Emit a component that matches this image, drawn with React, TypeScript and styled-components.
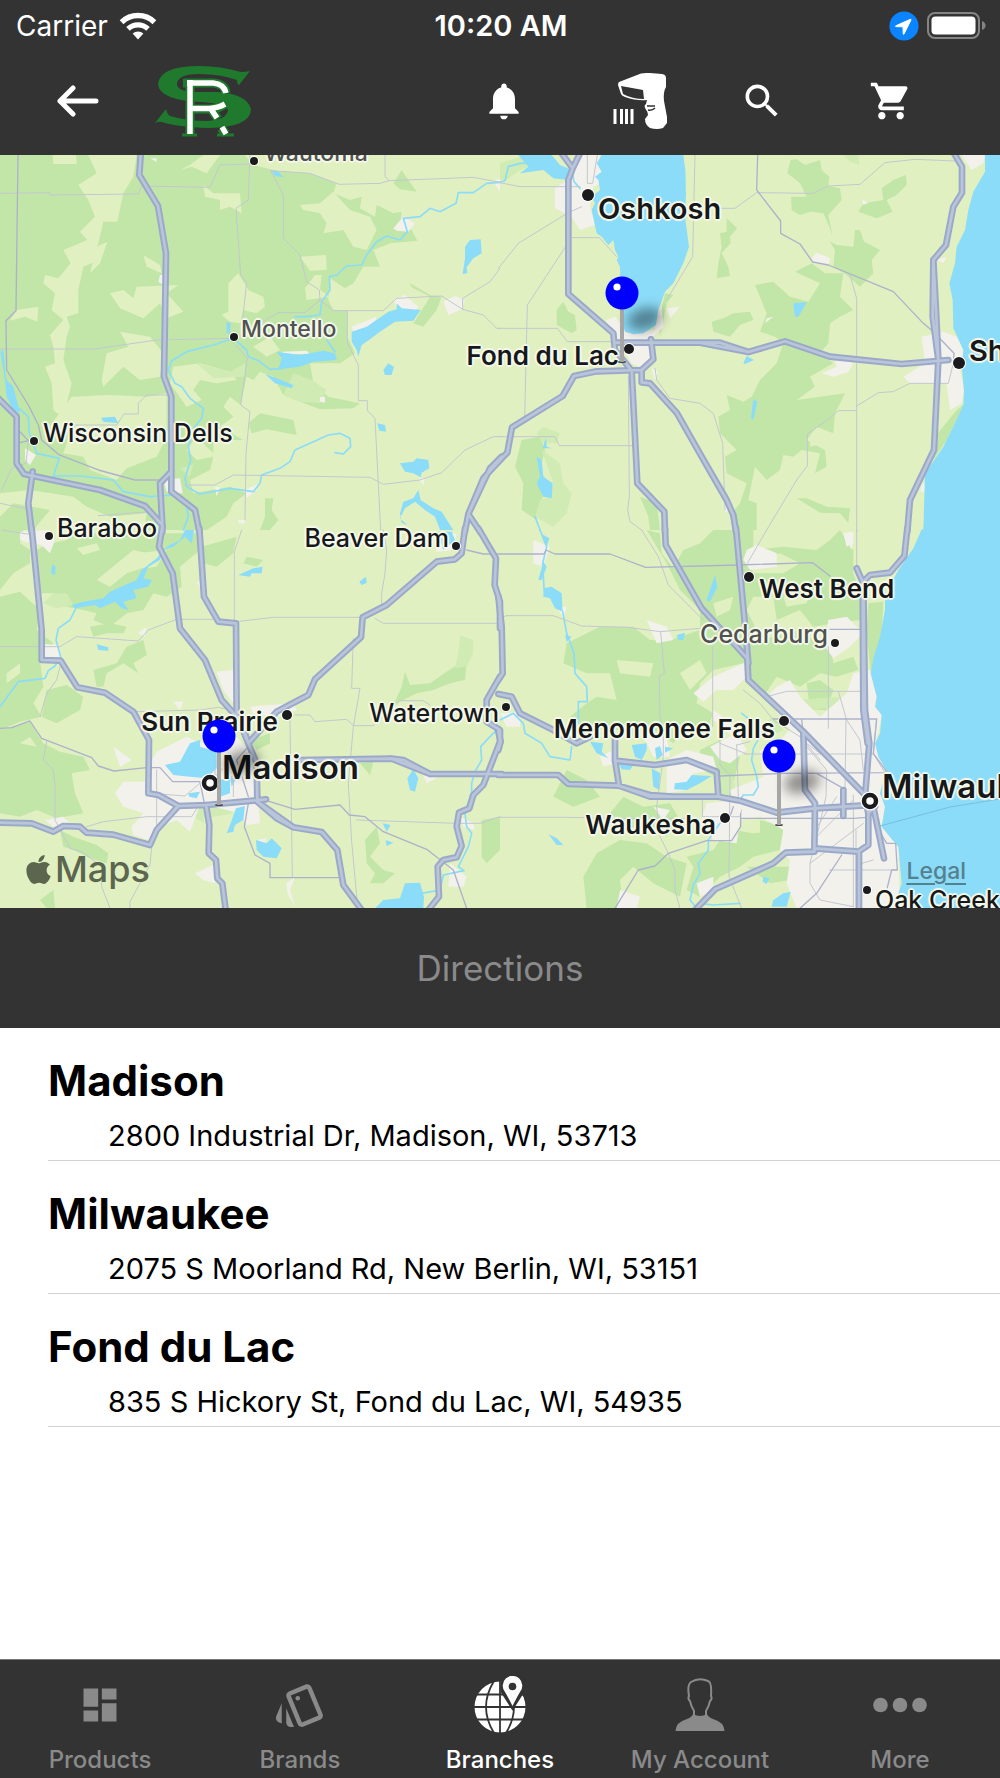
import React from 'react';
import styled, { createGlobalStyle } from 'styled-components';
import { MdDashboard, MdNotifications, MdOutlineStyle, MdSearch, MdShoppingCart } from 'react-icons/md';
import { FaApple } from 'react-icons/fa';

const color = {
  bar: '#333333',
  muted: '#8a8a8a',
  line: '#d2d2d2',
  land: '#e1f0c1',
  wood: '#c1e6a8',
  park: '#d0ebb3',
  town: '#f2f1ec',
  water: '#8bdcf8',
  minor: '#c3c8cf',
  major: '#adb2cb',
  casing: '#9ba9c9',
  highway: '#bbc5da',
};

const GlobalStyle = createGlobalStyle`
  *, *::before, *::after { box-sizing: border-box; }
  body {
    margin: 0;
    background: #fff;
    color: #000;
    font-family: Inter, "Liberation Sans", sans-serif;
  }
  button { font: inherit; color: inherit; background: none; border: 0; padding: 0; cursor: pointer; }
  h2, p, ul { margin: 0; padding: 0; }
  ul { list-style: none; }
  svg { display: block; }
`;

const Page = styled.div`
  display: flex;
  flex-direction: column;
  min-height: 100vh;
`;

/* ---------- top bars ---------- */

const Header = styled.header`
  background: ${color.bar};
  color: #fff;
`;

const StatusBar = styled.div`
  display: grid;
  grid-template-columns: 1fr auto 1fr;
  align-items: center;
  height: 50px;
  padding: 1px 14px 0 16px;
  font-size: 28px;
  line-height: 34px;
`;

const StatusGroup = styled.div<{ $end?: boolean }>`
  display: flex;
  align-items: center;
  justify-content: ${(p) => (p.$end ? 'flex-end' : 'flex-start')};
  gap: ${(p) => (p.$end ? '8px' : '11px')};
`;

const Clock = styled.time`
  font-size: 29px;
  font-weight: 600;
`;

const NavBar = styled.nav`
  display: flex;
  align-items: center;
  height: 105px;
  padding: 0 45px 4px 0;
`;

const NavButton = styled.button<{ $wide?: boolean }>`
  display: flex;
  align-items: center;
  justify-content: center;
  width: ${(p) => (p.$wide ? '155px' : '129px')};
  height: 100px;
`;

const NavActions = styled.div`
  display: flex;
  margin-left: auto;
`;

/* ---------- map ---------- */

const MapArea = styled.section`
  position: relative;
  overflow: hidden;
  aspect-ratio: 1000 / 753;
  background: ${color.land};
`;

const MapCanvas = styled.svg`
  width: 100%;
  height: 100%;
`;

type LabelSize = 'small' | 'town' | 'city' | 'large' | 'metro';

const labelFont: Record<LabelSize, string> = {
  small: '500 23px',
  town: '500 25px',
  city: '600 26px',
  large: '600 29px',
  metro: '600 33px',
};

const MapLabel = styled.span<{ $x: number; $y: number; $size: LabelSize; $end?: boolean; $faint?: boolean }>`
  position: absolute;
  top: ${(p) => ((p.$y - 155) / 753) * 100}%;
  ${(p) => (p.$end ? `right: ${(1000 - p.$x) / 10}%;` : `left: ${p.$x / 10}%;`)}
  transform: translateY(-50%);
  font: ${(p) => labelFont[p.$size]}/32px Inter, "Liberation Sans", sans-serif;
  color: ${(p) => (p.$faint ? '#505250' : '#17181a')};
  white-space: nowrap;
  text-shadow: 2px 0 1px #f5f8ec, -2px 0 1px #f5f8ec, 0 2px 1px #f5f8ec, 0 -2px 1px #f5f8ec,
    1px 1px 1px #f5f8ec, -1px -1px 1px #f5f8ec, 1px -1px 1px #f5f8ec, -1px 1px 1px #f5f8ec;
`;

const PinButton = styled.button<{ $x: number; $y: number }>`
  position: absolute;
  left: ${(p) => p.$x / 10}%;
  top: ${(p) => ((p.$y - 155) / 753) * 100}%;
  width: 80px;
  height: 90px;
  transform: translate(-20px, -20px);
`;

const MapBrand = styled.div`
  position: absolute;
  left: 22px;
  bottom: 19px;
  display: flex;
  align-items: center;
  color: #5c654e;
  font-size: 36px;
  font-weight: 500;
  line-height: 40px;
`;

const LegalLink = styled.a`
  position: absolute;
  right: 34px;
  bottom: 23px;
  color: #55808f;
  font-size: 23px;
  font-weight: 500;
  line-height: 28px;
  text-underline-offset: 4px;
  text-decoration-thickness: 2px;
`;

/* Geography, one sheet per quadrant. Sheet units are a third of a map unit. */
interface Sheet {
  x: number;
  y: number;
  wood: string;
  clearing: string;
  park: string;
  town: string;
  water: string;
  river: string;
  minor: string;
  major: string;
  highway: string;
}

const sheets: Sheet[] = [
  {
    x: 0,
    y: 150,
    wood: `M0 15H735L760 45 830 62 930 70 1010 100 1000 130 1050 150 1085 140 1080 175 1125 200 1130 165 1180 190 1205 185 1200 230
      1235 240 1252 272 1170 280 1120 300 1140 350 1090 350 1060 400 1035 415 990 385 985 450 1000 480 1042 482 1042 560 1065 610
      1020 640 930 640 940 700 985 740 1080 760 1060 775 960 778 900 755 850 735 820 680 780 665 760 690 740 680 722 765 690 740
      670 770 700 800 660 830 730 870 640 870 640 910 590 860 560 900 590 930 640 920 630 960 570 990 580 1030 690 1010 740 1030
      700 1060 680 1100 620 1140H0Z
      M1180 100L1205 60 1225 90 1250 125 1200 118Z M1230 400L1290 435 1325 440 1310 480 1270 530 1240 520 1275 465 1290 440 1235 412Z
      M780 790L880 810 890 855 800 838 755 850 745 820Z M795 1045H820L815 1080 835 1110 810 1140H780L795 1100Z`,
    clearing: `M265 15H410L400 80 370 130 352 215 310 215 290 300 295 330 250 350 235 420 235 490 200 500 210 530 200 560 190 630 215 700
      190 805 160 780 155 700 135 650 165 640 160 590 150 555 190 510 155 480 165 430 130 400 135 375 175 385 212 340 190 300 262 270
      240 245 285 200 265 150 235 105 290 70Z
      M158 15H228L230 42H160Z M48 480L115 470 112 515 75 500 30 512Z M270 370L290 290 322 275 300 340Z M430 315L480 345 485 370 440 350Z
      M330 430L370 420 400 445 410 410 535 405 500 430 550 485 500 505 480 460 430 505 360 475Z M360 545L450 560 490 610 480 680 420 690
      370 650 310 710 305 690 320 610 385 590Z M170 800L215 740 330 735 440 740 500 730 500 860 470 920 380 955 350 990 270 960 250 920
      190 910 210 850 150 830Z M520 650L600 640 690 665 710 690 650 700 600 690 580 720 605 750 560 770 510 700Z
      M540 60L570 45 610 15H660L620 70 575 50Z M610 105L640 130 720 130 725 190 690 170 660 180 660 150 615 140Z
      M900 165L960 160 1000 125 1050 180 1110 200 1130 240 1100 300 1060 290 1030 240 970 250 980 220 960 190 910 180Z
      M900 320L978 315 980 360 930 362Z M945 375H965L960 420 990 440 920 450 915 415Z M715 370L745 420 790 440 795 470 770 490 730 480
      720 520 690 515 665 495 685 485 685 400Z M760 590L810 560 840 600 800 620Z M0 1030L90 1020 220 1040 260 1070 330 1100 440 1090
      430 1140H100L150 1080 40 1060 0 1100Z M1080 15H1160V90L1020 100 960 70 1020 50Z`,
    park: `M590 640L690 665 735 640 735 680 640 685Z M880 670L935 690 980 720 960 760 900 755 850 735Z M540 955L580 945 570 980Z`,
    town: `M1180 235L1210 200 1245 220 1225 245 1190 242Z M1480 95L1500 85V125Z M1330 455L1365 438 1395 450 1385 478 1345 495Z
      M1180 450L1215 435 1255 470 1240 490 1190 470Z M1055 530L1130 500 1110 560 1075 590Z M960 742L975 740 975 758 960 755Z
      M75 895L108 915 90 945 75 930Z M480 375H490V405L475 395Z M490 990L540 985 548 1030 500 1025Z M735 1020L780 1000 770 1020 740 1045Z
      M845 605L920 602 930 612 850 612Z M1255 985H1275L1270 1005Z M715 1110H735V1120H715Z M645 1010L660 1012 650 1040Z M450 25H470V35Z`,
    water: `M815 62L835 65 850 82 825 78Z M1395 290L1410 270 1442 268 1445 310 1420 325 1400 352 1402 370 1388 372 1395 325Z
      M1055 545L1100 530 1165 485 1190 478 1190 460 1205 475 1262 480 1240 512 1185 515 1140 545 1110 568 1085 585 1075 620 1070 600 1055 575Z
      M830 605L900 615 970 602 1005 610 1010 630 940 635 900 650 835 658 845 625Z M795 672L830 685 880 705 875 715 825 700Z
      M680 515L692 520 690 550 680 550Z M1150 660L1165 640 1182 650 1175 675 1155 675Z M1132 820L1155 825 1158 845 1138 842Z
      M1200 940L1240 935 1250 925 1285 930 1288 955 1265 968 1262 982 1240 970 1215 965Z M1200 1090L1210 1055 1240 1045 1255 1020 1262 1050
      1300 1075 1325 1085 1360 1140H1320L1305 1100 1275 1080 1245 1055 1215 1075 1200 1105 1222 1125 1205 1118Z
      M303 803L345 800 355 820 310 815Z M15 685L40 710 60 790 40 780 20 740Z M0 600L12 620 15 670 8 650Z`,
    river: `M8 600L15 680 40 760 85 800 88 850 110 910 178 925 160 978 240 978 340 990 370 1025 450 1040 520 1035 560 1065 565 1100 550 1140
      M700 565L640 585 560 605 515 632 505 660 525 700 545 710 570 745 610 775 605 805 585 830 565 890 572 930 555 985 560 1010 600 1032
      690 1015 760 1025 780 1000 785 975 840 955 870 935 885 900 930 880 985 855 1020 850 1050 865 1052 890 1030 912 1005 908
      M700 565L740 600 745 620 775 632 810 658 850 655 M1005 605L980 570
      M885 500L920 500 960 495 965 455 990 420 988 380 1010 375 1040 348 1085 345 1100 315 1130 275 1160 258 1200 270 1222 245 1210 205 1260 200
      1290 175 1320 185 1368 160 1375 128 1420 128 1460 100 1500 97`,
    minor: `M0 130L150 128 150 135 415 132 425 108 630 112 660 45 745 42 M0 597H285L470 570 700 565 M750 15L745 150 708 175 722 375 740 398 722 560
      M708 585L742 625 722 765 750 785 738 910 735 1110 M812 62L850 135 850 265 900 315 920 395 958 420 960 450 915 488H835L790 515
      M1155 15V80L1168 92 M812 62L930 70 1018 103 1140 100 1168 92 1420 82 1500 97 M960 450L1000 482H1150L1190 445 1325 438 1388 478
      1450 495 1490 535H1500 M1042 482V580L1075 645V752H1102V782L1125 805 1142 1140 M555 1005H645L700 975 1110 982 1150 1003 1260 990 1325 968
      1395 900 1480 860H1500 M505 735H440L415 760V792H372L350 825H220 M0 1060L85 1077 M5 1020L35 955 78 940 85 870 50 840
      M295 1097L450 1085 M1388 478V445L1470 395 1500 355`,
    major: `M54 15L48 482 18 512 20 660 85 765 115 825 125 870 178 915 295 960 405 990H500 M50 880L85 872 50 835`,
    highway: `M422 15L418 75 474 168 498 310 492 680 514 740V1025L585 1080 598 1145 M514 965L480 1000 487 1125 487 1145
      M-5 745L50 800V940L72 972 100 978 300 1020 435 1068 487 1125 M98 965L85 1060 95 1145 M1505 925L1450 985 1405 1092 1395 1145
      M1505 920L1470 955 1405 1092 1440 1145`,
  },
  {
    x: 500,
    y: 150,
    wood: `M872 30L890 28 915 45 960 30 965 60 988 80 985 108 1020 115 1025 150 985 195 998 260 988 230 970 190 930 185 900 195 875 180
      873 140 920 140 900 100 862 70Z M1145 115L1180 90 1218 75 1220 105 1190 135 1160 150 1178 185 1130 205 1075 185 1090 160 1150 150Z
      M680 205L712 235 690 260 692 280 665 310 685 350 690 378 650 385 655 340 665 290 660 250 680 245Z
      M1065 240H1080L1092 275 1140 300 1115 330 1120 370 1080 410 1040 375 1000 350 1005 300 990 275 1010 285 1060 290Z
      M885 365L935 340 975 370 1030 370 1020 440 1060 480 1020 500 990 520 985 580 960 610 1000 640 930 680 945 710 890 750 1035 730
      1005 790 1000 850 950 830 920 870 975 900 980 950 945 970 960 910 905 900 880 920 850 915 840 960 800 990 765 950 745 1050 770 1060
      770 1140H700L690 1095 720 1060 740 1000 700 980 680 970 675 920 710 900 660 850 655 800 690 780 680 735 730 755 755 740 780 690 830
      640 850 580 825 560 780 545 800 490 765 405 820 395 870 440 925 455 960 400Z
      M170 480L190 455 205 485 225 495 230 540 215 550 170 525Z M635 515L670 505 700 490 750 485 760 510 720 525 690 560 640 545Z
      M65 870L120 860 135 900 120 960 145 1000 120 1060 110 1110 65 1080 70 1000 45 950Z M495 430L520 435 500 460 480 560 475 520Z
      M890 1045L920 1045 980 1070 1050 1075 1045 1120 1020 1090 960 1088Z M1395 760L1340 870 1300 930 1305 860 1370 780Z
      M420 1040L470 1060 480 1140H450L445 1100Z M330 15H365L345 30Z`,
    clearing: `M930 860L960 850 970 880 930 890Z`,
    park: `M125 900L180 940 190 1000 215 1030 200 1090 160 1130 105 1100 120 1050 150 1040 160 1000Z M110 850L130 830 180 850 170 880 130 880Z
      M0 90L0 40 60 20 110 40 60 60 20 90Z M1030 15H1075L1078 45 1050 35Z`,
    town: `M235 15H300L305 100 280 110 270 170 285 225 240 240 215 200 165 175 165 115 205 90 225 60Z M320 510L345 500 385 545 465 540 470 460
      485 470 490 530 460 560 465 630 430 655 395 640 370 600 330 560Z M500 475L540 470 510 505Z M935 325L950 308 990 325 985 345 940 340Z
      M1385 15H1455L1450 40 1415 60Z M1265 560L1330 545 1370 560 1395 610 1380 660 1392 720 1385 760 1350 780 1340 700H1230L1210 680 1275 640Z
      M965 670L1010 650 1000 620 1060 640 1045 665 1000 680Z M1310 330L1340 320 1330 340Z M455 655L475 665 465 690Z M670 1060L690 1055
      700 1085 675 1085Z M1265 1000H1275V1025H1262Z M355 60H400L420 95H370Z M1085 148L1105 158 1090 165Z M800 505L820 500 795 520Z`,
    water: `M305 15H550L556 60 558 130 555 200 567 290 550 340 520 400 495 425 475 480 468 525 430 550 400 553 375 545 362 500 360 350 350 330
      355 320 345 300 340 270 325 285 305 260 290 250 275 180 285 160 275 140 300 120 295 90 285 80 305 65 290 40Z
      M55 15H155L180 45 215 60 205 90 160 85 130 60 60 70 85 50Z M1455 15V65L1420 125 1405 180 1395 240 1370 290 1365 340 1348 400 1358 450
      1360 535 1390 600 1385 650 1392 720 1390 765 1365 820 1330 890 1275 970 1270 1145H1505V15Z
      M880 460L920 457 895 500H885Z M730 640L740 618 762 630 735 642Z M760 748L772 755 760 810 753 805Z M110 920L125 930 130 980 158 1000
      155 1045 130 1040 110 1000 120 980Z M138 862L140 890 155 895 128 895Z`,
    river: `M0 97L15 92 25 50 60 40 100 38 M215 60L222 95 240 115 M105 1100L120 1140`,
    minor: `M585 15L578 320 545 375 500 450 M660 175L705 175 770 128 940 130 985 108 1080 103 1155 38 1245 28 1365 33 M205 188L55 280 -5 355
      M245 170L205 188 M200 285L82 465 74 805 M215 263H298L350 320 M-5 535H172L202 575H340 M385 680L388 1040 383 1080 390 1115 425 1140
      M-5 860H165L178 887H395 M465 655L470 690 510 745 600 760 640 790 668 880 675 1080 M1050 375L1070 445V1145 M1070 768L1135 728 1180 725
      1230 700H1345L1360 640 M1070 782H1015L975 815 922 852V948L890 990 800 1140 M-5 97L60 110H240 M262 15V100H278L292 15`,
    major: `M773 15L770 120 842 213V250L900 282 938 336 985 345 1180 425 1265 515 1300 545 1362 610 1360 640`,
    highway: `M185 10L218 55 240 10 M218 55L205 90V432L340 550 345 600 395 662 M345 578H600L745 606 855 574 990 620 1205 642 1345 630
      M600 578H660L745 606 M453 568L460 628 425 660 290 664 222 678 188 738 36 832 22 908 -5 935 M395 662L412 1000 493 1085 495 1145
      M425 660V697L450 700 530 788 605 920 680 1050 700 1095 708 1145 M1362 10L1386 50V128L1360 170 1338 285 1300 330 1298 500 1315 630
      1302 900 1230 1050 1222 1145 M1300 330L1308 480 1315 630`,
  },
  {
    x: 0,
    y: 530,
    wood: `M0 0H70L60 40 90 60V100L40 130 0 180Z M110 60L200 10H590L600 60 540 110 545 170 500 200 460 190 430 240 380 250 330 290 280 270
      290 250 250 240 200 230 160 190 120 190Z M0 200L60 185 120 240 110 300 160 340 120 390 130 470 100 520 125 560 60 575 0 600Z
      M0 240L60 230 85 290 75 320 50 290 0 260Z M270 290L330 280 380 290 370 310 320 310 280 320Z M430 330L440 375 400 400 415 430 370 400
      320 430 310 470 290 470 280 420 350 400 380 350Z M0 600L90 575 130 640 180 665 250 680 270 720 215 730 225 790 250 850 170 865
      110 840 60 860 0 850Z M140 480L200 465 250 500 240 540 170 580 125 560Z M180 900L220 920 290 945 325 970 320 1000 270 985 220 960
      190 950Z M120 1110L160 1080 165 1135H140Z M1215 425L1230 465 1290 460 1340 425 1380 400 1400 400 1395 450 1350 460 1300 480 1250 490
      1180 525 1205 470Z M1130 890L1140 940 1110 980 1150 1020 1185 1030 1150 1060 1110 1060 1125 1030 1100 1000 1095 930Z M1445 870L1500 860
      V960L1460 1000 1445 980Z M605 50L710 20 700 70 650 110 610 100Z M750 630L810 610 810 640 770 660Z M1080 700L1120 695 1110 735Z
      M740 80L790 90 770 110 730 100Z`,
    clearing: `M290 150L400 60 440 70 440 110 380 130 330 170Z M150 10L220 5 200 30 155 40Z M410 70L500 60 470 110 430 115Z M230 55L290 40
      300 60 250 75Z M20 430L60 400 60 430 20 460Z M60 640L90 620 110 650Z`,
    park: `M130 220L160 190 200 190 220 225 170 235Z M1380 315L1420 330 1420 370 1400 410 1365 415 1375 370Z M570 860L615 820 700 850 640 860Z
      M615 825H730L735 845 625 850Z M580 860L610 840 612 880Z`,
    town: `M60 5L150 0 165 30 150 70 125 45 90 40 60 30Z M130 342L175 345 185 385 130 380Z M650 425L700 420V520L670 480Z M470 665L560 620 600 640
      650 600 710 620 745 660 770 700 775 820 780 880 740 885 720 850 640 830 600 825 570 905 530 870 480 890 445 930 400 915 395 890 430 850
      370 830 345 790 370 755H440L450 700Z M750 530L880 520 890 540 830 560 760 550Z M520 515H550L540 540Z M340 650L395 690 360 710Z
      M135 870L190 860 215 885 160 890Z M585 1030L650 1000 645 1060 610 1050Z M860 1060L885 1040 870 1080 885 1130 862 1090Z
      M1350 1000L1400 1040 1390 1070 1345 1070Z M1380 860L1420 880 1425 900 1390 890Z M1270 735L1310 745 1280 760Z M590 155L620 155 610 190Z
      M415 310L440 290 435 320Z M1300 20L1370 10 1360 60 1310 65Z M770 930L800 925 790 950Z`,
    water: `M555 0H582L575 40 555 20 520 50 490 60 480 90 445 110 430 145 455 150 445 170 400 180 410 205 370 215 385 240 365 235 345 215
      300 235 285 225 225 235 215 225 250 215 310 205 330 185 375 165 410 150 425 120 470 85 500 50 540 30Z M157 103L167 110 165 135 153 130Z
      M290 343L325 352 325 362 295 360Z M495 705L540 695 570 640 600 630 600 650 650 665 650 715 620 745 570 740 520 735Z
      M655 750L690 745 690 790 660 800Z M690 740L715 735 695 770Z M565 790L600 785 590 805 568 800Z M708 835L735 828 730 870 705 885
      700 905 680 910 690 885Z M768 930L800 940 815 925 845 955 830 985 790 980 770 960Z M715 135L760 115 788 110 785 130 755 130 750 140Z
      M1078 155L1098 140 1100 158 1085 165Z M1222 745L1240 718 1255 745 1245 785 1230 780Z M1148 880L1172 885 1160 905Z M1157 930L1180 938
      1160 948Z M1125 1135L1150 1110 1200 1105 1215 1060 1260 1058 1272 1100 1270 1135Z M1310 5H1355L1365 30 1330 60 1320 30Z`,
    river: `M230 230L210 270 175 295 168 330 182 380 165 408 145 422 135 445 55 455 0 530 M1500 590L1470 620 1442 650 1445 690 1425 725 1415 760
      1415 785 1395 850 1400 890 1415 910 1405 950 1375 1010 1392 1022 1330 1035 1320 1080 1265 1090`,
    minor: `M725 0L703 65V280 M1150 0L1160 60 1155 130 1145 190V220 M710 275L820 262H1090 M1125 265L1150 280H1500 M0 350H180L230 320 415 333 445 300
      530 268H640 M410 545L600 540 655 532 700 542 M1060 325L1055 475H1080L1060 590 1045 760 1055 935 1072 1120 M870 570L877 1040
      M885 555H930L945 575 1040 568 1060 587H1120L1200 512H1270L1290 525 M470 720V890 M165 765V870L210 955 245 965 305 1010V1070L330 1135
      M455 950L450 1005 390 1115V1135 M260 890L310 875 440 860H575L600 820 M140 635L130 690 160 720 165 765 M455 790L555 798 600 760
      M1070 870L1370 880H1440L1500 860 M645 720V740L700 680V800 M5 0L95 14 M180 410L170 450 140 490 120 560`,
    major: `M0 595L35 593 90 573 125 625 275 683 295 708 342 723 440 713H480L518 755H600L612 815 M800 812L885 838 1020 825 1048 855 1095 860
      1150 905 1280 958 1360 1020 1400 1135 M745 820L733 890 765 975 810 1000V1043H1030 M1400 60L1450 72H1500 M745 650L710 690 745 800`,
    highway: `M95 -5L125 300V390L182 392 232 472 315 488 400 545 447 630 445 790 475 795 535 828 620 825 798 808 M487 -10L477 50 518 130
      540 295 615 390 665 510 710 560 M598 -5L612 200 655 275 708 280 710 555 745 640 770 700 772 812 M772 815L830 865 880 892 965 906
      1012 960 1030 1065 1085 1140 M772 815L880 892 M-5 878L95 880 160 905 190 888 240 890 260 908 340 914 450 945 470 900 535 828
      M618 825L628 885 626 970 648 990 652 1045 667 1060 677 1140 M1395 -5L1385 70 1365 88 1310 95 1160 225 1088 262 1083 322 945 448
      925 495 830 545 745 640 725 580 M1435 -5L1488 85 1484 165 1500 215V295 M1500 440L1460 510V575L1500 600 1500 635 1450 765 1420 795
      1408 835 1377 848 1370 890 1385 948 1370 982 1330 990 1313 1010 1317 1100 1285 1140 M900 690L1175 686 1210 690 1290 732H1505
      M1175 686L1290 732`,
  },
  {
    x: 500,
    y: 530,
    wood: `M440 0L480 10 485 70 520 115 550 60 600 40 640 0H760L760 60 850 50 950 60 990 30 1020 0 1060 60 1060 130 1085 200 1080 270 1000 280
      940 290 900 240 830 270 820 200 760 200 740 240 770 300 750 350 730 400 640 420 600 460 590 520 640 550 620 600 560 590 520 640 450 590
      400 620 330 590 260 610 210 560 260 520 290 500 350 510 330 430 260 430 190 400 200 340 260 310 300 290 400 290 450 330 510 330 600 300
      600 240 540 180 500 100Z M1150 215L1145 310 1112 430 1100 300 1105 220Z M740 340L900 300 940 330 990 330 1000 400 1060 380 1075 420
      1010 440 960 430 900 470 830 440 790 500 750 460Z M200 720L260 750 300 800 220 830 160 800Z M370 800L430 830 510 820 540 870 500 920
      460 900 380 890 330 850Z M660 930L700 900 760 910 850 900 840 960 760 980 720 1010 660 1040 600 1100 560 1080 580 1010 560 980
      640 960Z M250 1040L290 970 360 930 440 940 500 980 560 1000 540 1100 460 1060 400 1010 360 1050 370 1135H260Z M920 460L960 450 1000 480
      980 540 930 540Z M740 1010H870V1050L810 1060Z M600 660L660 630 720 680 700 760 600 720Z M780 870L850 890 840 940 780 930Z`,
    clearing: `M750 100L840 70 900 100 850 130 760 130Z M350 390L460 400 450 440 360 430Z M540 430L600 390 620 430 570 480Z M640 220L700 200
      690 240 650 260Z M850 200L930 190 920 220 860 230Z M590 880L640 860 640 910 590 900Z`,
    park: `M660 730L700 740 710 800 660 790Z M820 560L850 600 810 620 790 580Z M890 510L1020 500 1010 530 900 545Z M930 1010L960 1030 940 1060Z`,
    town: `M740 60L770 45 830 70 830 110 750 120 730 90Z M985 270L1040 260 1090 310 1050 350 1000 385 975 350Z M640 440L730 400 740 440
      700 480 650 480 610 515 580 490Z M830 470L870 450 900 500 960 560 1040 490 1060 430 1110 420 1130 500 1145 560 1128 640 1155 700 1140 790
      1155 830 1145 890 1195 950 1200 1135H890L860 1060 870 990 840 960 850 900 780 860 720 870 710 940 640 930 600 880 620 820 700 810
      690 780 790 740 780 660 830 640 870 600 800 500Z M630 650L710 610 740 660 690 700 660 690Z M440 270L500 290 520 330 470 340Z
      M300 680L340 660 350 700 310 710Z M500 690L560 660 640 680 650 720 580 730 560 780 500 790Z M420 600L500 620 510 680 460 680Z
      M360 1080L420 1100 410 1135H350Z M590 1060L640 1040 640 1080 600 1100Z M100 30L150 50 130 110 100 100Z M170 230L200 230 190 265Z
      M0 550L60 545 60 590 20 590Z M1030 10L1060 5 1060 40 1040 50Z M640 540L720 600 700 620 640 570Z M460 830L510 840 490 870Z
      M1040 30L1060 20 1055 60Z`,
    water: `M1265 -2L1240 55 1195 120 1155 195 1155 240 1140 320 1120 385 1112 430 1130 500 1125 530 1145 555 1140 610 1125 640 1135 680
      1158 720 1140 790 1155 830 1145 890 1165 915 1195 950 1205 1060 1180 1135H1505V-2Z M130 15L148 25 140 50 125 20Z M130 95L140 110
      125 150 115 150Z M130 175L155 170 185 190 188 245 165 235 150 205 130 200Z M195 315L215 320 200 335Z M645 135L652 170 630 215 620 210Z
      M530 315L555 308 550 330 535 330Z M270 635L310 640 305 665 325 685 290 670Z M395 645L440 640 440 660 425 690 405 680Z M465 655L480 648
      488 675 470 690Z M495 650L520 655 495 668Z M455 715L480 730 478 780 460 770Z M355 700L400 705 390 720 365 718Z M525 760L560 755 575 735
      635 738 600 760 560 780 522 778Z M145 912L170 925 190 945 170 945Z M790 1040L808 1045 800 1062 788 1055Z M820 1110L850 1090 872 1085
      860 1130H815Z`,
    river: `M120 0L140 50 128 100 132 175 M188 245L200 310 222 370 225 430 260 470 262 515 235 515 235 580 M0 570L40 550 70 580 75 610 125 640 150 680
      210 690 215 650 M725 550L790 600 760 655 755 690 770 740 775 770 760 795 730 795 720 810 M660 880L625 930 625 960 595 1000 600 1030 580 1065
      570 1110 590 1135 M600 1120L640 1125 720 1120`,
    minor: `M425 0L475 80 505 165 610 270 M800 0L742 100 M1070 0V120 M-5 270L18 257H160L245 288 385 292 480 305 600 295 M482 305L493 430 478 440
      480 560 490 600V680L470 830 480 920 505 970 525 1020V1080L540 1135 M638 350V590 M0 862H200L360 865H560 M660 630V705L690 735 687 1040
      725 1135 M710 645L715 800 M710 645L750 635 M985 350V595 M800 500L860 484H1085 M1015 484L1040 570 1080 630 1090 720 M920 650L980 720 978 800
      955 900 930 1000 930 1060 960 1110 1060 1130 M920 640L1000 700 M735 672H1120L1155 728 M660 640L740 672 M607 800V860H720L725 840
      M1060 795V1130 M1068 900V1130 M940 930L1060 810 M930 1000L1090 880 M945 900L1010 800 M990 1020H1190 M1085 1000L1120 990 M1038 565L1035 780
      M1130 565L1120 670 M730 480L780 520 820 570 900 620 960 690`,
    major: `M0 72H132L138 60 165 72H330L437 112 715 105 938 98 990 138 M990 298H1085 M820 567H1130L1120 670 1160 725 M660 738L850 730 1160 728
      M725 865H1060L1100 862 M345 1135L415 1020 465 1008 505 970 620 932H695L722 890V850 M905 570L910 610 M1125 880L1160 940H1187L1192 1020
      M1025 975L950 1090 900 1135 M1160 1080L1175 1020H1190 M950 730L1030 775 M700 830L690 860`,
    highway: `M495 -5L497 45 605 235 742 385 745 450 910 605 1100 800 M708 -5L740 340 745 400 M1222 -5L1213 78 1170 128 1110 135 1090 155
      1095 540 1108 640 1095 800 1105 850V945L1075 965 943 955 M1088 155L1090 540 1103 640 M1070 115L1090 160 M-5 200L5 290 8 430 -5 450
      M-5 492L35 500 60 550 160 600 230 640 270 620 M-5 605L2 635 -5 660 M-5 735H175L205 762 355 767 450 795 520 800H655L720 812 830 848
      945 835 1095 826 M357 767L450 800H520 M345 620V690L357 767 M345 692L465 705 560 690 650 725 655 800 M910 605L915 780 945 820 943 965
      857 968 820 1000 645 1078 585 1140 M1030 780V858 M1120 830L1152 985 M1105 850L1125 830 M1077 965V1140`,
  },
];

type SheetLayer = Exclude<keyof Sheet, 'x' | 'y'>;

const fillLayers: { layer: SheetLayer; fill: string }[] = [
  { layer: 'wood', fill: color.wood },
  { layer: 'clearing', fill: color.land },
  { layer: 'park', fill: color.park },
  { layer: 'town', fill: color.town },
  { layer: 'water', fill: color.water },
];

const lineLayers: { layer: SheetLayer; stroke: string; width: number }[] = [
  { layer: 'river', stroke: color.water, width: 5 },
  { layer: 'minor', stroke: color.minor, width: 3 },
  { layer: 'major', stroke: color.major, width: 4 },
  { layer: 'highway', stroke: color.casing, width: 20 },
  { layer: 'highway', stroke: color.highway, width: 8 },
];

interface Place {
  name: string;
  size: LabelSize;
  dot: [number, number];
  label: [number, number];
  end?: boolean;
  faint?: boolean;
}

const places: Place[] = [
  { name: 'Wautoma', size: 'small', dot: [254, 161], label: [264, 153], faint: true },
  { name: 'Montello', size: 'small', dot: [234, 337], label: [241, 329], faint: true },
  { name: 'Wisconsin Dells', size: 'town', dot: [34, 441], label: [43, 433] },
  { name: 'Baraboo', size: 'town', dot: [49, 536], label: [57, 528] },
  { name: 'Oshkosh', size: 'large', dot: [588, 195], label: [598, 209] },
  { name: 'Fond du Lac', size: 'city', dot: [629, 349], label: [619, 356], end: true },
  { name: 'Sheboygan', size: 'large', dot: [959, 363], label: [969, 351] },
  { name: 'Beaver Dam', size: 'town', dot: [456, 546], label: [449, 538], end: true },
  { name: 'West Bend', size: 'city', dot: [749, 577], label: [759, 589] },
  { name: 'Cedarburg', size: 'town', dot: [835, 643], label: [828, 634], end: true, faint: true },
  { name: 'Sun Prairie', size: 'city', dot: [287, 715], label: [278, 722], end: true },
  { name: 'Watertown', size: 'town', dot: [506, 707], label: [499, 713], end: true },
  { name: 'Menomonee Falls', size: 'city', dot: [784, 721], label: [775, 729], end: true },
  { name: 'Madison', size: 'metro', dot: [210, 783], label: [222, 767] },
  { name: 'Waukesha', size: 'city', dot: [725, 818], label: [716, 825], end: true },
  { name: 'Milwaukee', size: 'metro', dot: [870, 801], label: [882, 786] },
  { name: 'Oak Creek', size: 'town', dot: [867, 890], label: [875, 900] },
];

const dotRadius: Record<LabelSize, number> = { small: 4, town: 4, city: 5, large: 6, metro: 6 };

function PlaceDot({ place }: { place: Place }) {
  const [cx, cy] = place.dot;
  if (place.size === 'metro') {
    return (
      <g>
        <circle cx={cx} cy={cy} r="9.500" fill="#fff" />
        <circle cx={cx} cy={cy} r="6" fill="#fff" stroke="#1b1b1d" strokeWidth="4.500" />
      </g>
    );
  }
  return <circle cx={cx} cy={cy} r={dotRadius[place.size]} fill="#1b1b1d" stroke="#fff" strokeWidth="2" paintOrder="stroke" />;
}

function Pin() {
  return (
    <svg width="80" height="90" viewBox="0 0 80 90" overflow="visible" aria-hidden="true">
      <defs>
        <filter id="pin-shadow" x="-80%" y="-100%" width="260%" height="300%">
          <feGaussianBlur stdDeviation="6" />
        </filter>
      </defs>
      <ellipse cx="43" cy="46" rx="18" ry="11" fill="#000" opacity=".4" transform="rotate(-15 43 46)" filter="url(#pin-shadow)" />
      <ellipse cx="20" cy="89" rx="4" ry="1" fill="#444" />
      <rect x="18" y="34" width="4" height="55" rx="1" fill="#a6a6a6" />
      <circle cx="20" cy="20" r="16.500" fill="#0000ff" />
      <circle cx="15" cy="14" r="3.600" fill="#fff" />
    </svg>
  );
}

function BranchMap() {
  return (
    <MapArea aria-label="Branch map">
      <MapCanvas viewBox="0 155 1000 753" preserveAspectRatio="xMidYMid slice" aria-hidden="true">
        {fillLayers.map(({ layer, fill }) => (
          <g key={layer} fill={fill}>
            {sheets.map((s) => (
              <path key={`${s.x}-${s.y}`} d={s[layer]} transform={`translate(${s.x} ${s.y}) scale(.33333)`} />
            ))}
          </g>
        ))}
        {lineLayers.map(({ layer, stroke, width }) => (
          <g key={`${layer}-${width}`} fill="none" stroke={stroke} strokeWidth={width} strokeLinejoin="round" strokeLinecap="round">
            {sheets.map((s) => (
              <path key={`${s.x}-${s.y}`} d={s[layer]} transform={`translate(${s.x} ${s.y}) scale(.33333)`} />
            ))}
          </g>
        ))}
        <path d="M880 826 950 807 1000 799" fill="none" stroke="#79bfdc" />
        {places.map((p) => (
          <PlaceDot key={p.name} place={p} />
        ))}
      </MapCanvas>
      {places.map((p) => (
        <MapLabel key={p.name} $x={p.label[0]} $y={p.label[1]} $size={p.size} $end={p.end} $faint={p.faint}>
          {p.name}
        </MapLabel>
      ))}
      {branches.map((b) => (
        <PinButton key={b.name} type="button" aria-label={`${b.name} branch`} $x={b.pin[0]} $y={b.pin[1]}>
          <Pin />
        </PinButton>
      ))}
      <MapBrand>
        <FaApple size={33} aria-hidden="true" />
        <span>Maps</span>
      </MapBrand>
      <LegalLink href="#legal">Legal</LegalLink>
    </MapArea>
  );
}

/* ---------- branch list ---------- */

const branches: { name: string; address: string; pin: [number, number] }[] = [
  { name: 'Madison', address: '2800 Industrial Dr, Madison, WI, 53713', pin: [219, 736] },
  { name: 'Milwaukee', address: '2075 S Moorland Rd, New Berlin, WI, 53151', pin: [779, 756] },
  { name: 'Fond du Lac', address: '835 S Hickory St, Fond du Lac, WI, 54935', pin: [622, 293] },
];

const DirectionsButton = styled.button`
  height: 120px;
  background: ${color.bar};
  color: ${color.muted};
  font-size: 35px;
  line-height: 44px;
`;

const BranchList = styled.ul`
  flex: 1;
  padding-left: 48px;
`;

const BranchItem = styled.li`
  padding: 28px 0 6px;
  border-bottom: 1px solid ${color.line};
`;

const BranchName = styled.h2`
  font-size: 42px;
  font-weight: 700;
  line-height: 50px;
`;

const BranchAddress = styled.p`
  margin-top: 12px;
  padding-left: 60px;
  font-size: 29px;
  line-height: 36px;
`;

/* ---------- tab bar ---------- */

const TabBar = styled.nav`
  display: grid;
  grid-template-columns: repeat(5, 1fr);
  height: 119px;
  background: ${color.bar};
  border-top: 1px solid #777;
`;

const Tab = styled.button<{ $active?: boolean }>`
  display: flex;
  flex-direction: column;
  align-items: center;
  color: ${(p) => (p.$active ? '#fff' : color.muted)};
  font-size: 24px;
  font-weight: 500;
  line-height: 28px;
`;

const TabIcon = styled.span`
  display: flex;
  align-items: center;
  justify-content: center;
  height: 60px;
  margin: 15px 0 11px;
`;

/* ---------- drawn icons ---------- */

function WifiIcon() {
  return (
    <svg width="38" height="28" viewBox="0 0 38 28" aria-hidden="true">
      <path d="M19 27.5 13.6 21.6a8 8 0 0 1 10.8 0Z" fill="#fff" />
      <path d="M9 16.8a14.6 14.6 0 0 1 20 0" fill="none" stroke="#fff" strokeWidth="5.2" />
      <path d="M2.6 10.2a23.6 23.6 0 0 1 32.8 0" fill="none" stroke="#fff" strokeWidth="5.4" />
    </svg>
  );
}

function LocationIcon() {
  return (
    <svg width="30" height="30" viewBox="0 0 30 30" aria-hidden="true">
      <circle cx="15" cy="15" r="14.6" fill="#0a84ff" />
      <path d="M21.4 8.3 6.8 14.8q-.9.5.2.8l7 .2.2 7q.3 1.200.8.2L22 8.900q.2-.9-.6-.6Z" fill="#fff" stroke="#fff" strokeLinejoin="round" />
    </svg>
  );
}

function BatteryIcon() {
  return (
    <svg width="59" height="28" viewBox="0 0 59 28" aria-hidden="true">
      <rect x="1" y="1" width="51" height="25" rx="7" fill="none" stroke="#858585" strokeWidth="2" />
      <rect x="4.500" y="4.500" width="44" height="18" rx="4" fill="#fff" />
      <path d="M55 9q3.500 1.500 3.500 4.500T55 18Z" fill="#858585" />
    </svg>
  );
}

function BackIcon() {
  return (
    <svg width="44" height="32" viewBox="0 0 44 32" aria-hidden="true">
      <path d="M40 16H4M17 3 4 16 17 29" fill="none" stroke="#fff" strokeWidth="5" strokeLinecap="round" strokeLinejoin="round" />
    </svg>
  );
}

/* Company monogram: a broad green band threaded through a white upright frame. */
function Logo() {
  return (
    <svg width="96" height="72" viewBox="0 0 96 72" role="img" aria-label="SR home">
      <path
        d="M95 6 84 20Q82 19 82 15 66 9 44 9 24 9 22 18 21 26 38 27H62Q92 29 96 44 96 62 54 63 22 62 7 57 4 56 0 58L11 44Q12 49 15 51 32 56 52 56 72 55 73 45 72 39 46 37 4 35 3 19 5 1 44 1 66 1 86 7 91 7 95 6Z"
        fill="#1f7a2e"
      />
      <path d="M27 70H42M62 70H79" stroke="#1f7a2e" strokeWidth="3" />
      <path d="M35 15V70M28 18H58Q70 19 71 28M35 44H54Q63 44 70 39M56 44 63 54M66 63 71 69" fill="none" stroke="#1f7a2e" strokeWidth="9" />
      <path d="M35 15V69M32 18H58Q69 19 71 28M35 43.500H54Q63 43 70 39M56 44 62 53M67 62 71 69" fill="none" stroke="#fff" strokeWidth="5.500" />
    </svg>
  );
}

function ScannerIcon() {
  return (
    <svg width="68" height="58" viewBox="-14 0 68 58" aria-hidden="true">
      <path
        fill="#fff"
        fillRule="evenodd"
        d="M6 10 28 1.500Q31 .6 37 1L49 2Q53 2.500 53 6V15Q50 20 51 29L54 45V51L50 56Q44 58 37 56 32 53 32 47L35 43Q35 40 32 36 31 33 33 32L34 28Q24 29 12 25 9 24 8 22L5 13Q5 11 6 10ZM8 14 10 22Q19 27 31 27L30 18Z"
      />
      <path d="M34 34H42M35 38Q39 39 42 36" fill="none" stroke={color.bar} strokeWidth="1.500" />
      <path d="M2 37V52M8.500 37V52M13.500 37V52M19 37V52" stroke="#fff" strokeWidth="3" />
    </svg>
  );
}

function GlobePinIcon() {
  return (
    <svg width="52" height="58" viewBox="0 0 52 58" aria-hidden="true">
      <circle cx="26" cy="31" r="25.500" fill="#fff" />
      <g fill="none" stroke={color.bar} strokeWidth="1.800">
        <path d="M26 5V57M0 31H52M2 18.500H50M2 43.500H50M20 5Q4 31 20 57M32 5Q48 31 32 57" />
      </g>
      <path d="M38.500 31 29 16Q26 0 38.500-1 51 0 48 16Z" fill={color.bar} stroke={color.bar} strokeWidth="4" />
      <path d="M38.500 30Q34 21 31 16A9.800 9.800 0 1 1 46 16Q43 21 38.500 30Z" fill="#fff" />
      <circle cx="38.500" cy="10.500" r="3.800" fill={color.bar} />
    </svg>
  );
}

function AccountIcon() {
  return (
    <svg width="50" height="54" viewBox="0 0 50 54" aria-hidden="true">
      <path
        d="M19 38V33Q16 28 15 23 12.500 21 14 18 12 7 16 4 24-1 33 3 37 4 36 18 37.500 21 35 23 34 28 31 33V38"
        fill="none"
        stroke="currentColor"
        strokeWidth="2"
      />
      <path d="M18 36Q25 40 32 36 33 39 38 41 49 44 49.500 53H.5Q1 44 12 41 17 39 18 36Z" fill="currentColor" />
    </svg>
  );
}

function MoreIcon() {
  return (
    <svg width="54" height="16" viewBox="0 0 54 16" fill="currentColor" aria-hidden="true">
      <circle cx="7.500" cy="8" r="7.300" />
      <circle cx="27" cy="8" r="7.300" />
      <circle cx="46.500" cy="8" r="7.300" />
    </svg>
  );
}

const tabs = [
  { label: 'Products', icon: <MdDashboard size={44} /> },
  { label: 'Brands', icon: <MdOutlineStyle size={54} /> },
  { label: 'Branches', icon: <GlobePinIcon />, active: true },
  { label: 'My Account', icon: <AccountIcon /> },
  { label: 'More', icon: <MoreIcon /> },
];

export default function App() {
  return (
    <>
      <GlobalStyle />
      <Page>
        <Header>
          <StatusBar>
            <StatusGroup>
              <span>Carrier</span>
              <WifiIcon />
            </StatusGroup>
            <Clock>10:20 AM</Clock>
            <StatusGroup $end>
              <LocationIcon />
              <BatteryIcon />
            </StatusGroup>
          </StatusBar>
          <NavBar aria-label="Toolbar">
            <NavButton type="button" aria-label="Back" $wide>
              <BackIcon />
            </NavButton>
            <Logo />
            <NavActions>
              <NavButton type="button" aria-label="Notifications">
                <MdNotifications size={44} />
              </NavButton>
              <NavButton type="button" aria-label="Scan barcode">
                <ScannerIcon />
              </NavButton>
              <NavButton type="button" aria-label="Search">
                <MdSearch size={44} />
              </NavButton>
              <NavButton type="button" aria-label="Cart">
                <MdShoppingCart size={44} />
              </NavButton>
            </NavActions>
          </NavBar>
        </Header>
        <BranchMap />
        <DirectionsButton type="button">Directions</DirectionsButton>
        <BranchList>
          {branches.map((b) => (
            <BranchItem key={b.name}>
              <BranchName>{b.name}</BranchName>
              <BranchAddress>{b.address}</BranchAddress>
            </BranchItem>
          ))}
        </BranchList>
        <TabBar aria-label="Sections">
          {tabs.map((t) => (
            <Tab key={t.label} type="button" $active={t.active} aria-current={t.active ? 'page' : undefined}>
              <TabIcon>{t.icon}</TabIcon>
              {t.label}
            </Tab>
          ))}
        </TabBar>
      </Page>
    </>
  );
}
